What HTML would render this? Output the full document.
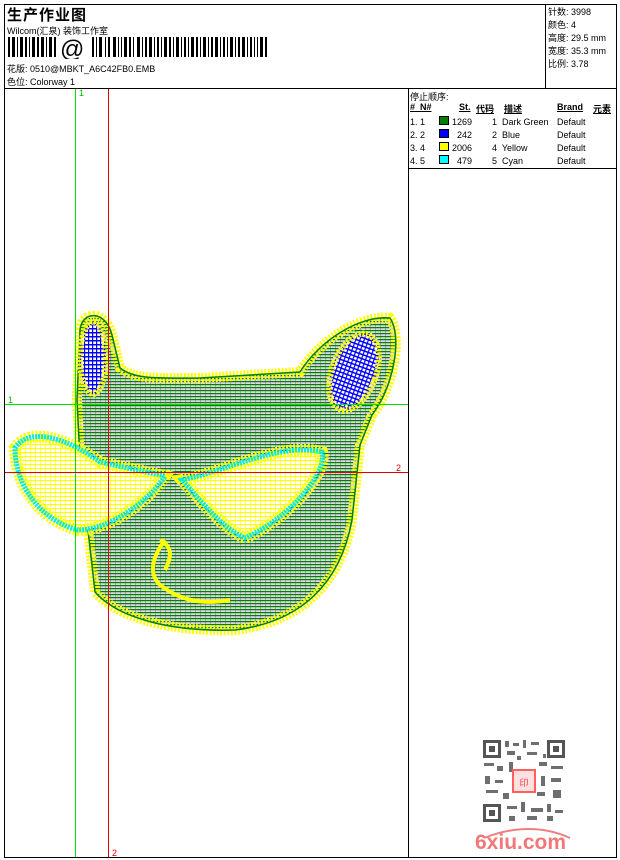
<!DOCTYPE html>
<html><head><meta charset="utf-8"><style>
*{margin:0;padding:0;box-sizing:border-box}
body{width:620px;height:860px;background:#fff;position:relative;overflow:hidden;font-family:"Liberation Sans","Noto Sans CJK SC",sans-serif;font-size:9px;color:#000}
.a{position:absolute;white-space:nowrap}
.l{position:absolute;background:#000}
</style></head><body>
<div class="l" style="left:4px;top:4px;width:613px;height:1px"></div>
<div class="l" style="left:4px;top:857px;width:613px;height:1px"></div>
<div class="l" style="left:4px;top:4px;width:1px;height:854px"></div>
<div class="l" style="left:616px;top:4px;width:1px;height:854px"></div>
<div class="l" style="left:4px;top:88px;width:613px;height:1px"></div>
<div class="l" style="left:545px;top:4px;width:1px;height:84px"></div>
<div class="l" style="left:408px;top:88px;width:1px;height:770px"></div>
<div class="l" style="left:408px;top:168px;width:209px;height:1px"></div>

<div class="a" style="left:7px;top:4px;font-size:15px;font-weight:bold;letter-spacing:1px">生产作业图</div>
<div class="a" style="left:7px;top:24px">Wilcom(汇泉) 装饰工作室</div>
<svg class="a" style="left:8px;top:37px" width="262" height="22">
<g fill="#000">
<rect x="0" y="0" width="2" height="20"/><rect x="4" y="0" width="3" height="20"/><rect x="9" y="0" width="1" height="20"/><rect x="12" y="0" width="3" height="20"/><rect x="17" y="0" width="2" height="20"/><rect x="21" y="0" width="1" height="20"/><rect x="24" y="0" width="3" height="20"/><rect x="29" y="0" width="2" height="20"/><rect x="33" y="0" width="3" height="20"/><rect x="38" y="0" width="1" height="20"/><rect x="41" y="0" width="3" height="20"/><rect x="46" y="0" width="2" height="20"/>
<rect x="84" y="0" width="2" height="20"/><rect x="88" y="0" width="1" height="20"/><rect x="91" y="0" width="3" height="20"/><rect x="97" y="0" width="1" height="20"/><rect x="100" y="0" width="2" height="20"/><rect x="105" y="0" width="3" height="20"/><rect x="110" y="0" width="1" height="20"/><rect x="113" y="0" width="1" height="20"/><rect x="116" y="0" width="3" height="20"/><rect x="121" y="0" width="2" height="20"/><rect x="125" y="0" width="1" height="20"/><rect x="129" y="0" width="3" height="20"/><rect x="134" y="0" width="1" height="20"/><rect x="137" y="0" width="2" height="20"/><rect x="141" y="0" width="3" height="20"/><rect x="146" y="0" width="1" height="20"/><rect x="149" y="0" width="2" height="20"/><rect x="153" y="0" width="1" height="20"/><rect x="156" y="0" width="3" height="20"/><rect x="161" y="0" width="2" height="20"/><rect x="165" y="0" width="1" height="20"/><rect x="168" y="0" width="3" height="20"/><rect x="173" y="0" width="1" height="20"/><rect x="176" y="0" width="2" height="20"/><rect x="180" y="0" width="1" height="20"/><rect x="183" y="0" width="3" height="20"/><rect x="188" y="0" width="2" height="20"/><rect x="192" y="0" width="1" height="20"/><rect x="195" y="0" width="3" height="20"/><rect x="200" y="0" width="1" height="20"/><rect x="203" y="0" width="2" height="20"/><rect x="207" y="0" width="3" height="20"/><rect x="212" y="0" width="1" height="20"/><rect x="215" y="0" width="2" height="20"/><rect x="219" y="0" width="1" height="20"/><rect x="222" y="0" width="3" height="20"/><rect x="227" y="0" width="1" height="20"/><rect x="230" y="0" width="2" height="20"/><rect x="234" y="0" width="3" height="20"/><rect x="239" y="0" width="1" height="20"/><rect x="242" y="0" width="2" height="20"/><rect x="246" y="0" width="1" height="20"/><rect x="249" y="0" width="1" height="20"/><rect x="252" y="0" width="3" height="20"/><rect x="257" y="0" width="2" height="20"/>
</g>
<text x="52" y="20" font-size="24" font-family="Liberation Sans">@</text>
</svg>
<div class="a" style="left:7px;top:62px">花版: 0510@MBKT_A6C42FB0.EMB</div>
<div class="a" style="left:7px;top:75px">色位: Colorway 1</div>

<div class="a" style="left:548px;top:6px;line-height:13px">针数: 3998<br>颜色: 4<br>高度: 29.5 mm<br>宽度: 35.3 mm<br>比例: 3.78</div>

<div class="a" style="left:410px;top:90px">停止顺序:</div>
<div class="a" style="left:410px;top:102px;font-weight:bold;text-decoration:underline">#&nbsp; N#</div>
<div class="a" style="left:459px;top:102px;font-weight:bold;text-decoration:underline">St.</div>
<div class="a" style="left:476px;top:102px;font-weight:bold;text-decoration:underline">代码</div>
<div class="a" style="left:504px;top:102px;font-weight:bold;text-decoration:underline">描述</div>
<div class="a" style="left:557px;top:102px;font-weight:bold;text-decoration:underline">Brand</div>
<div class="a" style="left:593px;top:102px;font-weight:bold;text-decoration:underline">元素</div>
<div class="a" style="left:410px;top:116px;line-height:13px">1. 1<br>2. 2<br>3. 4<br>4. 5</div>
<div class="a" style="left:439px;top:116px;width:10px;height:9px;background:#008000;border:1px solid #000"></div>
<div class="a" style="left:439px;top:129px;width:10px;height:9px;background:#0000ff;border:1px solid #000"></div>
<div class="a" style="left:439px;top:142px;width:10px;height:9px;background:#ffff00;border:1px solid #000"></div>
<div class="a" style="left:439px;top:155px;width:10px;height:9px;background:#00ffff;border:1px solid #000"></div>
<div class="a" style="left:450px;top:116px;line-height:13px;width:22px;text-align:right">1269<br>242<br>2006<br>479</div>
<div class="a" style="left:492px;top:116px;line-height:13px">1&nbsp; Dark Green<br>2&nbsp; Blue<br>4&nbsp; Yellow<br>5&nbsp; Cyan</div>
<div class="a" style="left:557px;top:116px;line-height:13px">Default<br>Default<br>Default<br>Default</div>

<svg class="a" style="left:0;top:0" width="408" height="860">
<defs>
<pattern id="g" width="5" height="3" patternUnits="userSpaceOnUse"><rect width="5" height="3" fill="#e0d4e8"/><rect y="0" width="5" height="1.2" fill="#008000"/><rect x="0" width="0.8" height="3" fill="#008000" opacity=".45"/></pattern>
<pattern id="y" width="5" height="4" patternUnits="userSpaceOnUse"><rect width="5" height="4" fill="#fff"/><rect width="5" height="1.2" fill="#ffff00"/><rect width="1" height="4" fill="#ffff00" opacity=".6"/></pattern>
<pattern id="b" width="4" height="4" patternUnits="userSpaceOnUse"><rect width="4" height="4" fill="#fff"/><rect width="4" height="1.5" fill="#0000ff"/><rect width="1.2" height="4" fill="#0000ff"/></pattern>
</defs>
<path d="M80,330 C82,310 106,310 112,335 L120,368 C135,380 160,378 200,378 L300,372 C320,340 360,315 390,318 C402,335 395,385 372,415 L360,445 L352,520 C340,585 300,622 235,630 C170,632 118,618 95,592 L88,530 L80,460 L77,400 Z" fill="url(#g)" stroke="#ffff00" stroke-width="10" stroke-dasharray="2 1.5"/>
<path d="M80,330 C82,310 106,310 112,335 L120,368 C135,380 160,378 200,378 L300,372 C320,340 360,315 390,318 C402,335 395,385 372,415 L360,445 L352,520 C340,585 300,622 235,630 C170,632 118,618 95,592 L88,530 L80,460 L77,400 Z" fill="none" stroke="#008000" stroke-width="1.5"/>
<ellipse cx="93" cy="358" rx="13" ry="36" fill="url(#b)" stroke="#ffff00" stroke-width="6" stroke-dasharray="2 1.5"/>
<ellipse cx="354" cy="372" rx="22" ry="40" transform="rotate(20 354 372)" fill="url(#b)" stroke="#ffff00" stroke-width="6" stroke-dasharray="2 1.5"/>
<path d="M165,540 C150,560 150,575 160,585 C180,600 200,605 230,600 M160,540 C175,548 170,560 165,570" fill="none" stroke="#ffff00" stroke-width="4"/>
<path d="M15,448 C30,425 70,440 100,462 L165,476 C150,500 110,530 78,530 C40,520 15,485 15,448 Z" fill="url(#y)" stroke="#ffff00" stroke-width="12" stroke-dasharray="2 1.5"/>
<path d="M15,448 C30,425 70,440 100,462 L165,476 C150,500 110,530 78,530 C40,520 15,485 15,448 Z" fill="none" stroke="#00e8f0" stroke-width="5" stroke-dasharray="2 1"/>
<path d="M182,480 C230,470 280,442 322,452 C328,472 290,518 245,538 C222,528 200,500 182,480 Z" fill="url(#y)" stroke="#ffff00" stroke-width="12" stroke-dasharray="2 1.5"/>
<path d="M182,480 C230,470 280,442 322,452 C328,472 290,518 245,538 C222,528 200,500 182,480 Z" fill="none" stroke="#00e8f0" stroke-width="5" stroke-dasharray="2 1"/>
<line x1="75.5" y1="89" x2="75.5" y2="857" stroke="#00e000"/>
<line x1="108.5" y1="89" x2="108.5" y2="857" stroke="#e00000"/>
<line x1="5" y1="404.5" x2="408" y2="404.5" stroke="#00e000"/>
<line x1="5" y1="472.5" x2="408" y2="472.5" stroke="#e00000"/>
<text x="79" y="96" fill="#00c000" font-size="9" font-family="Liberation Sans">1</text>
<text x="112" y="856" fill="#e00000" font-size="9" font-family="Liberation Sans">2</text>
<text x="8" y="403" fill="#00c000" font-size="9" font-family="Liberation Sans">1</text>
<text x="396" y="471" fill="#e00000" font-size="9" font-family="Liberation Sans">2</text>
</svg>

<svg class="a" style="left:474px;top:738px" width="102" height="114">
<g transform="translate(7,0)">
<rect x="2" y="2" width="82" height="82" fill="#fff"/>
<g fill="#555">
<rect x="2" y="2" width="18" height="18"/><rect x="66" y="2" width="18" height="18"/><rect x="2" y="66" width="18" height="18"/>
</g>
<g fill="#fff"><rect x="5" y="5" width="12" height="12"/><rect x="69" y="5" width="12" height="12"/><rect x="5" y="69" width="12" height="12"/></g>
<g fill="#555"><rect x="8" y="8" width="6" height="6"/><rect x="72" y="8" width="6" height="6"/><rect x="8" y="72" width="6" height="6"/></g>
<g fill="#555" opacity=".85">
<rect x="24" y="3" width="4" height="6"/><rect x="32" y="5" width="6" height="3"/><rect x="42" y="2" width="3" height="8"/><rect x="50" y="4" width="8" height="3"/><rect x="26" y="13" width="8" height="4"/><rect x="46" y="14" width="10" height="3"/><rect x="3" y="25" width="10" height="3"/><rect x="16" y="28" width="6" height="5"/><rect x="28" y="24" width="4" height="10"/><rect x="58" y="24" width="8" height="4"/><rect x="70" y="28" width="12" height="3"/><rect x="4" y="38" width="5" height="8"/><rect x="14" y="42" width="8" height="3"/><rect x="60" y="38" width="4" height="10"/><rect x="70" y="40" width="10" height="4"/><rect x="5" y="52" width="12" height="3"/><rect x="22" y="55" width="6" height="6"/><rect x="56" y="54" width="8" height="4"/><rect x="72" y="52" width="8" height="8"/><rect x="26" y="68" width="10" height="3"/><rect x="40" y="64" width="4" height="10"/><rect x="50" y="70" width="12" height="4"/><rect x="66" y="66" width="4" height="8"/><rect x="74" y="72" width="8" height="3"/><rect x="28" y="78" width="6" height="5"/><rect x="46" y="78" width="10" height="4"/><rect x="66" y="78" width="6" height="5"/><rect x="36" y="18" width="4" height="4"/><rect x="62" y="16" width="3" height="4"/>
</g>
<rect x="31" y="31" width="24" height="24" fill="#ff6060"/>
<rect x="33" y="33" width="20" height="20" fill="#ffe0e0"/>
<text x="43" y="48" font-size="9" fill="#f04040" text-anchor="middle" font-family="Noto Sans CJK SC,sans-serif">印</text>
</g>
<path d="M10,100 C40,88 70,88 96,100" fill="none" stroke="#f08080" stroke-width="2"/>
<text x="1" y="111" font-size="21" font-weight="bold" fill="#f07878" font-family="Liberation Sans">6xiu.com</text>
</svg>
</body></html>
